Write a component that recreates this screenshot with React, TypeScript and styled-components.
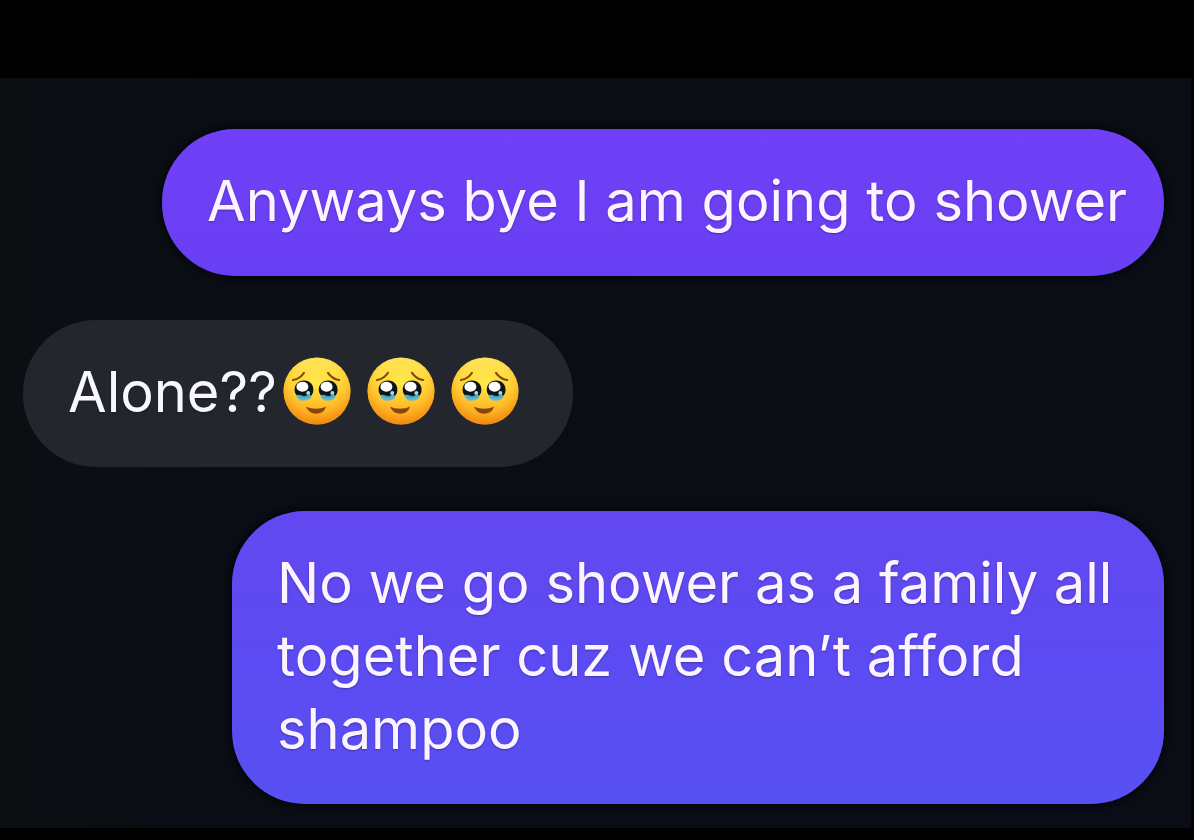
import React, { useId } from "react";
import styled, { createGlobalStyle } from "styled-components";

const GlobalStyle = createGlobalStyle`
  * { box-sizing: border-box; }
  body { margin: 0; background: #000; }
`;

const Page = styled.div`
  min-height: 100vh;
  padding: 78px 0 12px;
  background: #000;
`;

const Thread = styled.main`
  display: flex;
  flex-direction: column;
  gap: 44px;
  padding: 51px 27px 24px 23px;
  border-right: 3px solid #020308;
  background: linear-gradient(90deg, #0b0f12 0%, #0a0d14 20%, #0a0d15 100%);
  font-family: Inter, "Liberation Sans", sans-serif;
`;

const Bubble = styled.p<{ $sent?: boolean; $fill: string; $width: string }>`
  align-self: ${(p) => (p.$sent ? "flex-end" : "flex-start")};
  width: ${(p) => p.$width};
  max-width: 100%;
  margin: 0;
  padding: 36px 32px 38px 45px;
  border-radius: 73px;
  background: ${(p) => p.$fill};
  box-shadow: ${(p) => (p.$sent ? "0 0 6px 2px #04050b" : "none")};
  color: ${(p) => (p.$sent ? "#fbf3ff" : "#f8f7fe")};
  font-size: 56px;
  font-weight: 400;
  font-variant-ligatures: none;
  line-height: 73px;
  text-shadow: 0 1px 2px rgba(10, 5, 40, 0.35);
`;

const EmojiLine = styled(Bubble)`
  display: flex;
  align-items: center;
`;

const Emojis = styled.span`
  display: flex;
  gap: 16px;
  margin: 0 0 4px 6px;
`;

const Face = styled.svg`
  display: block;
  width: 68px;
  height: 68px;
`;

function TearyFace() {
  const id = useId();
  const skin = `${id}skin`;
  const shine = `${id}shine`;
  const tear = `${id}tear`;
  return (
    <Face viewBox="0 0 68 68" role="img" aria-label="Face holding back tears">
      <defs>
        <linearGradient id={skin} x1="0" y1="0" x2="0" y2="1">
          <stop offset="0" stopColor="#ffe866" />
          <stop offset="0.35" stopColor="#ffdc3c" />
          <stop offset="0.65" stopColor="#ffc02c" />
          <stop offset="1" stopColor="#fb9a1b" />
        </linearGradient>
        <radialGradient id={shine} cx="0.5" cy="0.38" r="0.64">
          <stop offset="0" stopColor="#fff65a" stopOpacity="0.6" />
          <stop offset="0.55" stopColor="#ffd030" stopOpacity="0.2" />
          <stop offset="0.8" stopColor="#f79b16" stopOpacity="0.55" />
          <stop offset="1" stopColor="#e87d0c" stopOpacity="0.8" />
        </radialGradient>
        <radialGradient id={tear} cx="0.5" cy="0.3" r="0.7">
          <stop offset="0" stopColor="#2b86a8" />
          <stop offset="0.55" stopColor="#4fb4d3" />
          <stop offset="1" stopColor="#86bda4" />
        </radialGradient>
      </defs>
      <circle cx="34" cy="34" r="33.5" fill={`url(#${skin})`} />
      <circle cx="34" cy="34" r="33.5" fill={`url(#${shine})`} />
      <path d="M10 23C15 22.2 18.7 19.5 21 15.8" fill="none" stroke="#7d4908" strokeWidth="2.1" strokeLinecap="round" />
      <path d="M45 15.8C47.5 19.5 51.2 22.2 56.2 23" fill="none" stroke="#7d4908" strokeWidth="2.1" strokeLinecap="round" />
      {[21, 45.2].map((x) => (
        <g key={x} transform={`translate(${x} 32.5)`}>
          <path d="M-8 3C-8 9.5-4.5 11.5.5 11.3C5.5 11 8.3 8 8 3Z" fill={`url(#${tear})`} />
          <path d="M-9.3 1.5C-10-4.5-6-9 0-9C6-9 10-4.5 9.3 1.5C9 4 8 5.5 6.8 6C4.5 4.2 2.5 6.8 0 6.5C-2.8 6.2-4.5 4.5-7 5.8C-8.3 5-9 3.5-9.3 1.5Z" fill="#0e1518" />
          <ellipse cx="-1.6" cy="-2.7" rx="6" ry="5" fill="#fff" />
          <circle cx="4.2" cy="3.4" r="2" fill="#a9dcea" />
        </g>
      ))}
      <path d="M23.2 49.8C29 52.4 37.5 52.4 43 49.5C40.5 59 26.5 59.2 23.2 49.8Z" fill="#8a4510" />
    </Face>
  );
}

export default function App() {
  return (
    <>
      <GlobalStyle />
      <Page>
        <Thread>
          <Bubble $sent $width="1002px" $fill="linear-gradient(#7040f7, #693ff3)">
            Anyways bye I am going to shower
          </Bubble>
          <EmojiLine $width="550px" $fill="#24262d">
            Alone??
            <Emojis>
              <TearyFace />
              <TearyFace />
              <TearyFace />
            </Emojis>
          </EmojiLine>
          <Bubble $sent $width="932px" $fill="linear-gradient(#6348f1, #5c4bf2 50%, #5750f3)">
            No we go shower as a family all together cuz we can’t afford shampoo
          </Bubble>
        </Thread>
      </Page>
    </>
  );
}
